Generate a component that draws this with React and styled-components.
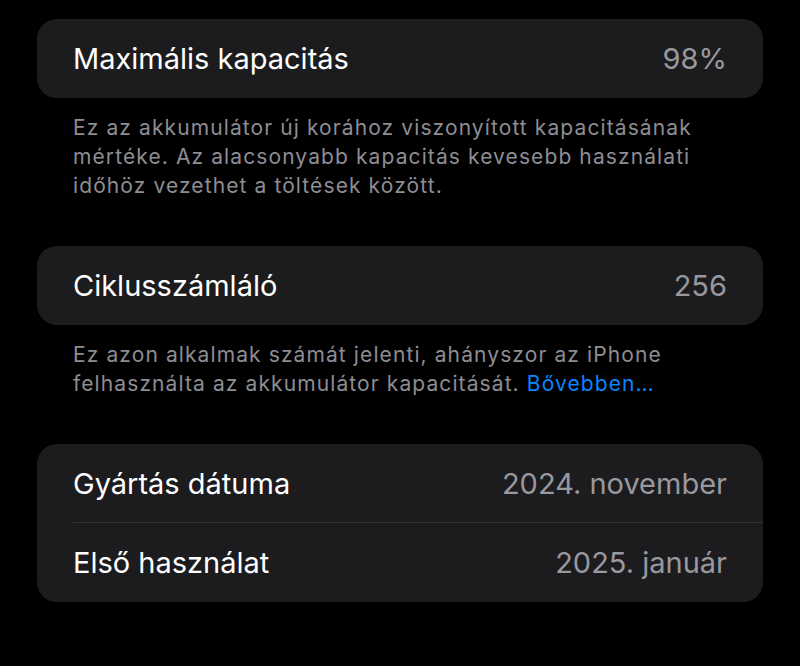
import React from "react";
import styled, { createGlobalStyle } from "styled-components";

const Global = createGlobalStyle`
  html, body { margin: 0; padding: 0; background: #000; }
  body {
    font-family: Inter, "Noto Sans", "Liberation Sans", sans-serif;
    -webkit-font-smoothing: antialiased;
  }
`;

const Page = styled.div`
  background: #000;
  min-height: 666px;
  padding: 19px 37px 0;
  box-sizing: border-box;
  display: flex;
  flex-direction: column;
  gap: 46px;
`;

const Section = styled.section`
  display: flex;
  flex-direction: column;
`;

const Card = styled.div`
  background: #1c1c1e;
  border-radius: 20px;
  overflow: hidden;
`;

const Row = styled.div`
  height: 79px;
  display: flex;
  align-items: center;
  justify-content: space-between;
  padding: 0 36px;
  box-sizing: border-box;
  position: relative;
  ${(p) =>
    p.$divider &&
    `
    &::after {
      content: "";
      position: absolute;
      left: 36px;
      right: 0;
      bottom: 0;
      height: 1px;
      background: #333336;
    }
  `}
`;

const Label = styled.span`
  color: #fff;
  font-size: 29px;
  letter-spacing: 0px;
`;

const Value = styled.span`
  color: #98989f;
  font-size: 29px;
  letter-spacing: 0px;
`;

const Footer = styled.p`
  margin: 0;
  padding: 15px 36px 0;
  color: #8d8d93;
  font-size: 21px;
  line-height: 29px;
  letter-spacing: 1.1px;
`;

const Link = styled.a`
  color: #0a84ff;
  text-decoration: none;
`;

export default function App() {
  return (
    <>
      <Global />
      <Page>
        <Section>
          <Card>
            <Row>
              <Label>Maximális kapacitás</Label>
              <Value>98%</Value>
            </Row>
          </Card>
          <Footer>
            Ez az akkumulátor új korához viszonyított kapacitásának
            <br />
            mértéke. Az alacsonyabb kapacitás kevesebb használati
            <br />
            időhöz vezethet a töltések között.
          </Footer>
        </Section>
        <Section>
          <Card>
            <Row>
              <Label>Ciklusszámláló</Label>
              <Value>256</Value>
            </Row>
          </Card>
          <Footer>
            Ez azon alkalmak számát jelenti, ahányszor az iPhone
            <br />
            felhasználta az akkumulátor kapacitását.{" "}
            <Link href="#">Bővebben…</Link>
          </Footer>
        </Section>
        <Section>
          <Card>
            <Row $divider>
              <Label>Gyártás dátuma</Label>
              <Value>2024. november</Value>
            </Row>
            <Row>
              <Label>Első használat</Label>
              <Value>2025. január</Value>
            </Row>
          </Card>
        </Section>
      </Page>
    </>
  );
}
